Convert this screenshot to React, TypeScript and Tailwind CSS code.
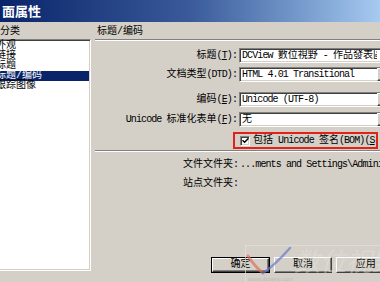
import React from "react";

// latin runs are narrower than the 10px CJK glyphs, like SimSun
const L = ({ children }: { children: React.ReactNode }) => (
  <span className="tracking-[-0.9px]">{children}</span>
);

const U = ({ children }: { children: React.ReactNode }) => (
  <span className="underline underline-offset-1">{children}</span>
);

const sunken =
  "border border-t-[#808080] border-l-[#808080] border-b-white border-r-white shadow-[inset_1px_1px_0_#404040,inset_-1px_-1px_0_#d4d0c8]";
const raised =
  "border border-t-white border-l-white border-b-[#404040] border-r-[#404040] shadow-[inset_-1px_-1px_0_#808080,inset_1px_1px_0_#d4d0c8]";

const Field = ({ children, dropdown }: { children: React.ReactNode; dropdown?: boolean }) => (
  <div className={`ml-[2px] flex h-[15px] w-[160px] shrink-0 items-center bg-white ${sunken}`}>
    <div className="w-[137px] shrink-0 overflow-hidden whitespace-nowrap pl-[2px]">{children}</div>
    {dropdown && <div className={`h-full w-[16px] bg-[#d4d0c8] ${raised}`} />}
  </div>
);

const Row = ({ label, children, className }: { label: React.ReactNode; children: React.ReactNode; className: string }) => (
  <div className={`flex h-[15px] items-center ${className}`}>
    <div className="w-[142px] shrink-0 whitespace-nowrap text-right">{label}</div>
    {children}
  </div>
);

const Etched = ({ className }: { className: string }) => (
  <div className={`h-[2px] border-t border-t-[#808080] border-b border-b-white ${className}`} />
);

const Button = ({ label, isDefault }: { label: string; isDefault?: boolean }) => (
  <div className={`h-[16px] w-[64px] ${isDefault ? "border border-black" : ""}`}>
    <div className={`flex h-full w-full items-center justify-center ${raised}`}>{label}</div>
  </div>
);

const categories = ["外观", "链接", "标题", "标题/编码", "跟踪图像"];

export default function App() {
  return (
    <div className="relative h-[282px] w-[380px] overflow-hidden bg-[#d4d0c8] font-[family-name:'Liberation_Mono','Noto_Sans_CJK_SC',monospace] text-[10px] leading-[12px] text-black">
      {/* title bar */}
      <div className="flex h-[22px] items-center bg-linear-to-r from-[#0a246a] via-[#3a5a9a] to-[#a6caf0] pl-[2px] font-[family-name:'Noto_Sans_CJK_SC',sans-serif] text-[13px] font-bold text-white">
        面属性
      </div>

      <div className="flex h-[260px]">
        {/* category list */}
        <div className="ml-[-8px] flex w-[99px] shrink-0 flex-col">
          <div className="mt-[4px] pl-[8px]">分类</div>
          <div className={`mt-[1px] h-[232px] bg-white ${sunken} p-px`}>
            {categories.map((c, i) => (
              <div
                key={c}
                className={`h-[10px] whitespace-nowrap pl-[2px] leading-[10px] ${i === 3 ? "bg-[#0a246a] text-white" : ""}`}
              >
                {c}
              </div>
            ))}
          </div>
        </div>

        {/* form */}
        <div className="ml-[4px] flex w-[300px] shrink-0 flex-col">
          <div className="mt-[4px] pl-[2px]">标题/编码</div>
          <Etched className="mt-[1px]" />

          <Row className="mt-[7px]" label={<>标题<L>(<U>T</U>):</L></>}>
            <Field>
              <L>DCView </L>數位視野<L> - </L>作品發表區
            </Field>
          </Row>
          <Row className="mt-[4px]" label={<>文档类型<L>(DTD):</L></>}>
            <Field dropdown>
              <L>HTML 4.01 Transitional</L>
            </Field>
          </Row>
          <Row className="mt-[10px]" label={<>编码<L>(<U>E</U>):</L></>}>
            <Field dropdown>
              <L>Unicode (UTF-8)</L>
            </Field>
          </Row>
          <Row className="mt-[5px]" label={<><L>Unicode </L>标准化表单<L>(<U>F</U>):</L></>}>
            <Field dropdown>无</Field>
          </Row>

          <div className="ml-[138px] mt-[5px] flex h-[17px] w-[145px] items-center overflow-hidden whitespace-nowrap border-2 border-[#e3211b] pl-[5px]">
            <div className={`flex h-[10px] w-[10px] shrink-0 items-center justify-center bg-white ${sunken}`}>
              <svg width="7" height="7" viewBox="0 0 7 7">
                <path d="M0.5 3.2 L2.6 5.3 L6.5 1.2" stroke="#000" strokeWidth="1.4" fill="none" />
              </svg>
            </div>
            <span className="ml-[3px]">
              包括<L> Unicode </L>签名<L>(BOM)(<U>S</U>)</L>
            </span>
          </div>

          <Etched className="mt-[1px]" />

          <div className="mt-[7px] flex">
            <div className="w-[143px] shrink-0 text-right">文件文件夹<L>:</L></div>
            <div className="ml-[2px] whitespace-nowrap">
              <L>...ments and Settings\Administrator</L>
            </div>
          </div>
          <div className="mt-[7px] flex">
            <div className="w-[143px] shrink-0 text-right">站点文件夹<L>:</L></div>
          </div>

          <div className="mb-[9px] ml-[116px] mt-auto flex gap-[4px]">
            <Button label="确定" isDefault />
            <Button label="取消" />
            <Button label="应用" />
          </div>
        </div>
      </div>

      {/* watermark over the buttons */}
      <div className="pointer-events-none absolute left-[245px] top-[245px] h-[40px] w-[140px] border-l border-t border-[#e4e2dc] opacity-70">
        <svg className="absolute left-0 top-0" width="60" height="34" viewBox="0 0 60 34">
          <path d="M2 10 Q10 22 17 27" stroke="#e0705a" strokeWidth="3" fill="none" strokeLinecap="round" />
          <path d="M17 27 Q28 20 44 2" stroke="#6a7ccc" strokeWidth="2.5" fill="none" strokeLinecap="round" />
        </svg>
        <div className="absolute left-[48px] top-[-2px] whitespace-nowrap font-[family-name:'Noto_Sans_CJK_SC',sans-serif] text-[26px] italic leading-[32px] text-[#e6e4de] opacity-60">
          数位视野
        </div>
        <div className="absolute left-[2px] top-[30px] whitespace-nowrap font-[family-name:'Liberation_Sans',sans-serif] text-[6px] leading-[6px] text-[#b8b4ac]">
          www.dcview.com
        </div>
      </div>
    </div>
  );
}
